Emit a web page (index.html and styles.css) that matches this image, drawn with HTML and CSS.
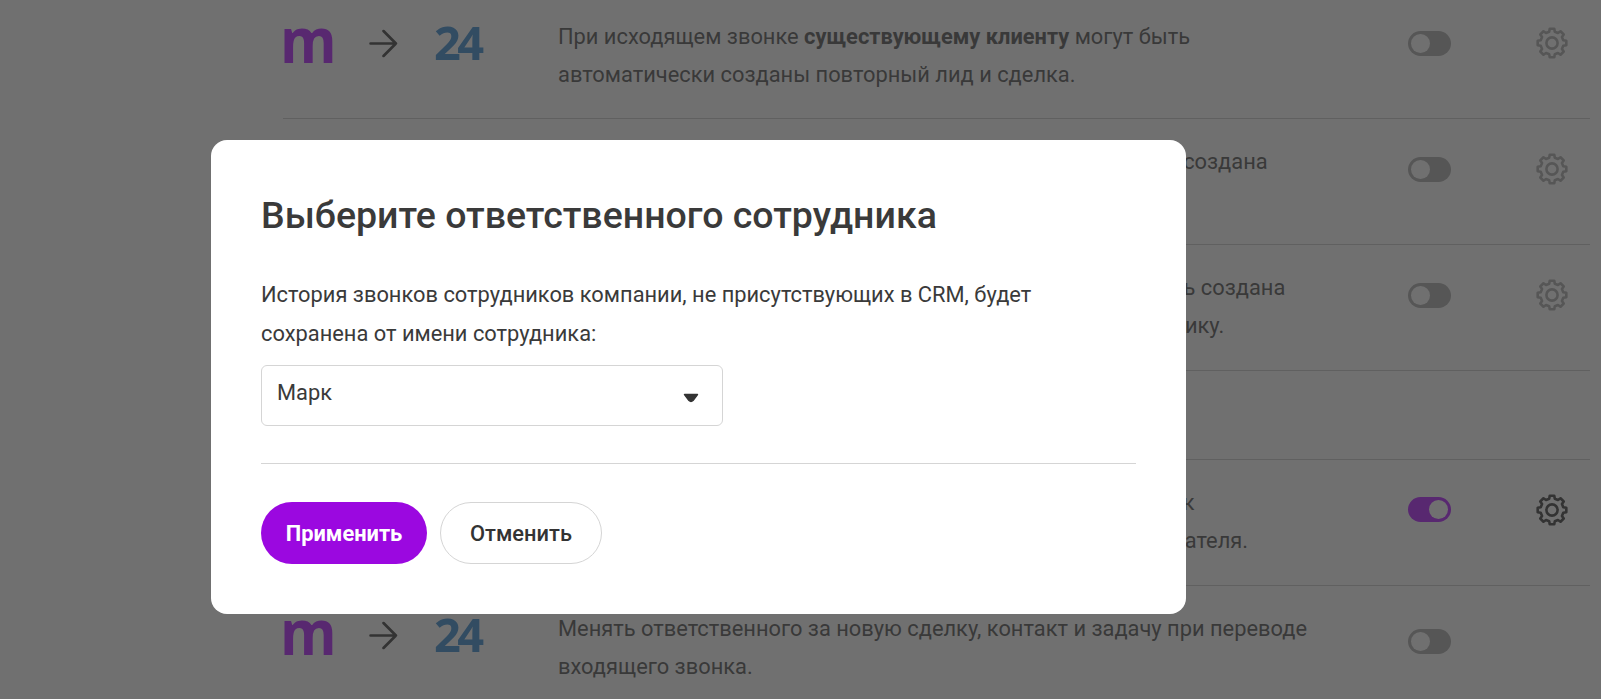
FILE: index.html
```html
<!DOCTYPE html>
<html lang="ru">
<head>
    <meta charset="UTF-8">
    <meta name="viewport" content="width=device-width, initial-scale=1.0">
    <title>Выберите ответственного сотрудника</title>
    <link rel="stylesheet" href="styles.css">
</head>
<body>
<svg class="defs" width="0" height="0">
    <symbol id="gear" viewBox="0 0 32 32">
        <polygon points="13.19,4.74 13.73,1.68 18.27,1.68 18.81,4.74 21.98,6.05 24.52,4.27 27.73,7.48 25.95,10.02 27.26,13.19 30.32,13.73 30.32,18.27 27.26,18.81 25.95,21.98 27.73,24.52 24.52,27.73 21.98,25.95 18.81,27.26 18.27,30.32 13.73,30.32 13.19,27.26 10.02,25.95 7.48,27.73 4.27,24.52 6.05,21.98 4.74,18.81 1.68,18.27 1.68,13.73 4.74,13.19 6.05,10.02 4.27,7.48 7.48,4.27 10.02,6.05" fill="none" stroke="currentColor" stroke-width="2.6" stroke-linejoin="round"/>
        <circle cx="16" cy="16" r="5.6" fill="none" stroke="currentColor" stroke-width="2.6"/>
    </symbol>
    <symbol id="arrow" viewBox="0 0 28 28">
        <path d="M1.5 14H26M14 2l12 12-12 12" fill="none" stroke="currentColor" stroke-width="2.6" stroke-linecap="round" stroke-linejoin="round"/>
    </symbol>
</svg>

<div class="list">
    <div class="row row-first">
        <div class="logos">
            <span class="logo-m">m</span>
            <svg class="logo-arrow"><use href="#arrow"/></svg>
            <span class="logo-24">24</span>
        </div>
        <p class="text">При исходящем звонке <b>существующему клиенту</b> могут быть<br>автоматически созданы повторный лид и сделка.</p>
        <span class="toggle"></span>
        <svg class="gear"><use href="#gear"/></svg>
    </div>
    <div class="row">
        <div class="logos">
            <span class="logo-m">m</span>
            <svg class="logo-arrow"><use href="#arrow"/></svg>
            <span class="logo-24">24</span>
        </div>
        <p class="text">При входящем звонке нового клиента автоматически будет создана<br>карточка лида и сделка.</p>
        <span class="toggle"></span>
        <svg class="gear"><use href="#gear"/></svg>
    </div>
    <div class="row">
        <div class="logos">
            <span class="logo-m">m</span>
            <svg class="logo-arrow"><use href="#arrow"/></svg>
            <span class="logo-24">24</span>
        </div>
        <p class="text">При исходящем звонке новому клиенту из CRM, должна быть создана<br>карточка лида и сделка с задачами ответственному сотруднику.</p>
        <span class="toggle"></span>
        <svg class="gear"><use href="#gear"/></svg>
    </div>
    <div class="row row-title">
        <p class="text">Дополнительные настройки</p>
    </div>
    <div class="row">
        <div class="logos">
            <span class="logo-m">m</span>
            <svg class="logo-arrow"><use href="#arrow"/></svg>
            <span class="logo-24">24</span>
        </div>
        <p class="text">Хранить историю звонков сотрудников, не присутствующих к<br>сделке, и назначать её на выбранного в настройках пользователя.</p>
        <span class="toggle toggle-on"></span>
        <svg class="gear gear-on"><use href="#gear"/></svg>
    </div>
    <div class="row row-last">
        <div class="logos">
            <span class="logo-m">m</span>
            <svg class="logo-arrow"><use href="#arrow"/></svg>
            <span class="logo-24">24</span>
        </div>
        <p class="text">Менять ответственного за новую сделку, контакт и задачу при переводе<br>входящего звонка.</p>
        <span class="toggle"></span>
    </div>
</div>

<div class="overlay"></div>

<div class="modal">
    <h2 class="modal-title">Выберите ответственного сотрудника</h2>
    <p class="modal-text">История звонков сотрудников компании, не присутствующих в CRM, будет<br>сохранена от имени сотрудника:</p>
    <div class="select">
        <span>Марк</span>
        <svg class="select-arrow" viewBox="0 0 16 10"><path d="M1.5 1.5h13L10 7.6Q8 9.4 6 7.6z" fill="#333" stroke="#333" stroke-width="1.4" stroke-linejoin="round"/></svg>
    </div>
    <div class="buttons">
        <button class="btn btn-primary">Применить</button>
        <button class="btn btn-cancel">Отменить</button>
    </div>
</div>
</body>
</html>
```

FILE: styles.css
```css
html, body {
    height: 100%;
}
body {
    font-family: Roboto, "Liberation Sans", sans-serif;
    color: #484848;
    background-color: white;
    margin: 0;
    overflow: hidden;
}
.defs {
    position: absolute;
}
.list {
    margin-left: 283px;
    width: 1307px;
}
.row {
    display: flex;
    align-items: flex-start;
    height: 126px;
    box-sizing: border-box;
    padding-top: 23px;
    border-bottom: 1px solid #c8c8c8;
}
.row-first {
    height: 119px;
    padding-top: 17px;
}
.row-title {
    height: 89px;
}
.row-title .text {
    margin-left: 275px;
}
.row-last {
    border-bottom: none;
}
.logos {
    display: flex;
    align-items: flex-start;
    width: 275px;
    flex-shrink: 0;
    color: #333;
}
.logo-m {
    display: block;
    width: 86px;
    height: 44px;
    margin-left: -3px;
    margin-right: 3px;
    font-family: "Open Sans", sans-serif;
    font-size: 62px;
    font-weight: 700;
    line-height: 44px;
    color: #ae0eff;
    transform: scaleX(0.93);
    transform-origin: left center;
}
.logo-arrow {
    width: 29px;
    height: 29px;
    margin-top: 12px;
    margin-right: 37px;
}
.logo-24 {
    display: block;
    margin-top: 2px;
    margin-left: -1px;
    font-family: "Open Sans", sans-serif;
    font-size: 47px;
    font-weight: 700;
    line-height: 46px;
    letter-spacing: -3.5px;
    color: #2f86cf;
    filter: blur(0.5px);
}
.text {
    width: 850px;
    margin: 1px 0 0;
    font-size: 21.85px;
    line-height: 38px;
    white-space: nowrap;
}
.toggle {
    position: relative;
    flex-shrink: 0;
    box-sizing: border-box;
    width: 43px;
    height: 25px;
    margin-top: 15px;
    border-radius: 13px;
    background: #a8a8a8;
}
.row-first .toggle {
    margin-top: 14px;
}
.toggle::after {
    content: "";
    position: absolute;
    top: 3px;
    left: 3px;
    width: 19px;
    height: 19px;
    border-radius: 50%;
    background: white;
}
.toggle-on {
    background: #ae0eff;
    margin-top: 14px;
}
.toggle-on::after {
    left: 21px;
}
.row-last .toggle {
    margin-top: 20px;
}
.gear {
    width: 32px;
    height: 32px;
    margin-top: 11px;
    margin-left: 85px;
    color: #a8a8a8;
}
.row-first .gear {
    margin-top: 10px;
}
.gear-on {
    color: #333;
}
.overlay {
    position: fixed;
    inset: 0;
    background: rgba(51, 51, 51, 0.7);
}
.modal {
    position: absolute;
    left: 211px;
    top: 140px;
    width: 975px;
    box-sizing: border-box;
    padding: 49px 50px 50px;
    background: white;
    border-radius: 16px;
    color: #3a3a3a;
}
.modal-title {
    margin: 0 0 35px;
    font-size: 37.5px;
    font-weight: 500;
    line-height: 52px;
}
.modal-text {
    margin: 0 0 12px;
    font-size: 21.85px;
    line-height: 38.5px;
}
.select {
    display: flex;
    align-items: center;
    justify-content: space-between;
    box-sizing: border-box;
    width: 462px;
    height: 61px;
    padding: 0 23px 6px 15px;
    border: 1px solid #d5d5d5;
    border-radius: 6px;
    font-size: 21.85px;
}
.select-arrow {
    width: 16px;
    height: 10px;
    margin-top: 10px;
}
.buttons {
    display: flex;
    gap: 13px;
    margin-top: 37px;
    padding-top: 38px;
    border-top: 1px solid #d5d5d5;
}
.btn {
    height: 62px;
    border-radius: 31px;
    font-family: Roboto, sans-serif;
    font-size: 21.85px;
    color: #333;
}
.btn-primary {
    width: 166px;
    border: none;
    background: #9b08e0;
    color: white;
    font-weight: 700;
}
.btn-cancel {
    width: 162px;
    border: 1px solid #d5d5d5;
    background: white;
    font-weight: 500;
}
```
